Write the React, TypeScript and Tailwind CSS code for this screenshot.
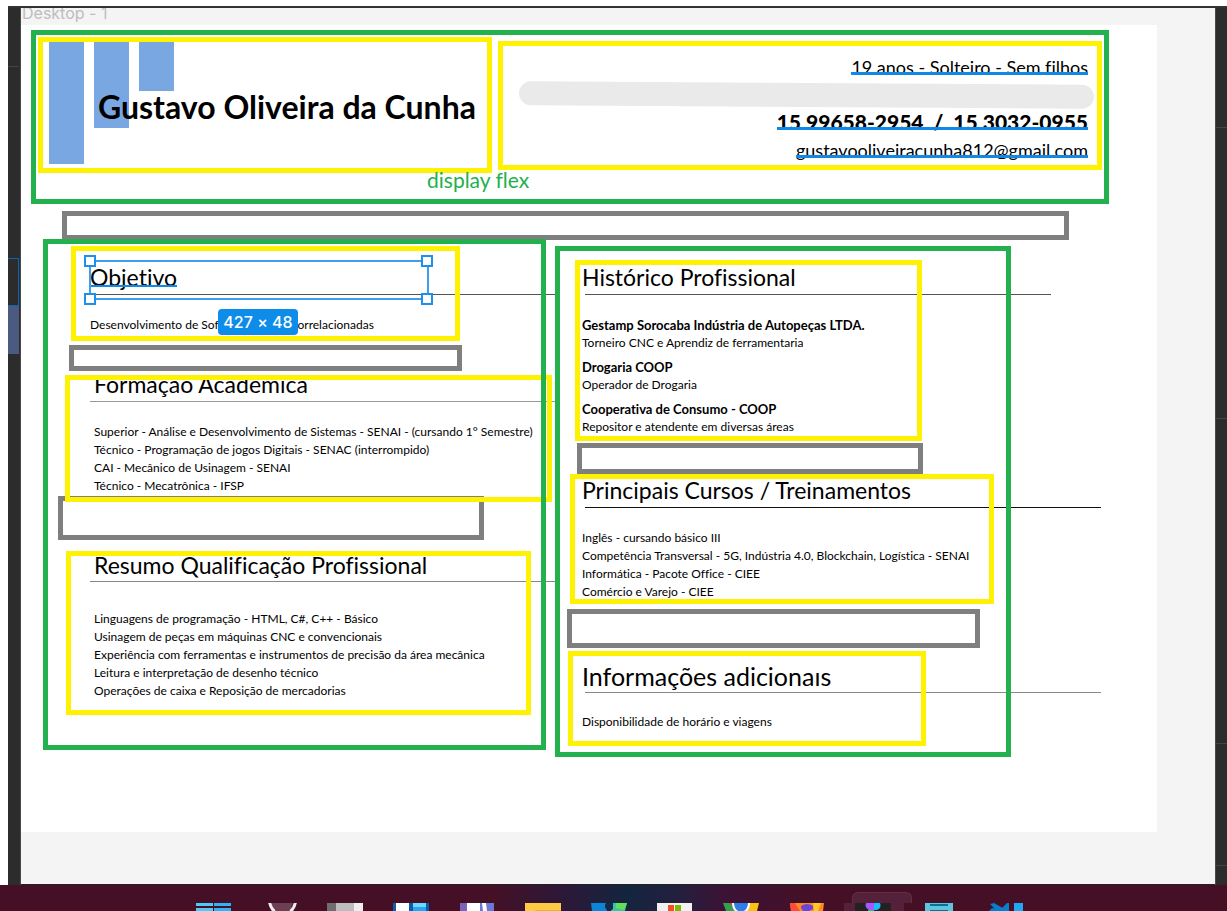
import type { ReactNode } from "react";

const yellowFrame =
  "relative after:absolute after:inset-0 after:border-5 after:border-[#fff200] after:content-[''] after:pointer-events-none";
const greenFrame =
  "relative after:absolute after:inset-0 after:border-5 after:border-[#22b14c] after:content-[''] after:pointer-events-none";

function Spacer({ className }: { className: string }) {
  return <div className={`border-5 border-[#7f7f7f] ${className}`} />;
}

function Section({
  title,
  box,
  inset,
  rule,
  children,
  headingClass = "text-[23px]",
}: {
  title: ReactNode;
  box: string;
  inset: string;
  rule: string;
  children: ReactNode;
  headingClass?: string;
}) {
  return (
    <section className={`${yellowFrame} ${box}`}>
      <h2 className={`relative leading-7 whitespace-nowrap ${inset} ${headingClass}`}>{title}</h2>
      <div className={`h-px ${rule}`} />
      <div className={`text-xs leading-[18px] whitespace-nowrap ${inset}`}>{children}</div>
    </section>
  );
}

function Lines({ items, className = "mt-[21px]" }: { items: string[]; className?: string }) {
  return (
    <ul className={className}>
      {items.map((item) => (
        <li key={item} className="leading-[18px]">
          {item}
        </li>
      ))}
    </ul>
  );
}

function ContactLine({ children, className = "" }: { children: ReactNode; className?: string }) {
  return (
    <p
      className={`relative whitespace-pre leading-7 after:absolute after:inset-x-0 after:bottom-[6px] after:h-[3px] after:bg-[#1088e8] after:content-[''] ${className}`}
    >
      {children}
    </p>
  );
}

const handle = "absolute size-3 border-2 border-[#1e90ea] bg-white";

function Selection() {
  return (
    <div className="pointer-events-none absolute -left-px -top-[3px] h-10 w-[340px] border-2 border-[#3f9fee]">
      <span className={`${handle} -left-[7px] -top-[7px]`} />
      <span className={`${handle} -right-[6px] -top-[7px]`} />
      <span className={`${handle} -bottom-[7px] -left-[7px]`} />
      <span className={`${handle} -bottom-[7px] -right-[6px]`} />
      <span className="absolute left-[127px] top-[47px] flex h-[26px] w-20 items-center justify-center rounded bg-[#0d8ce9] font-[Inter,sans-serif] text-base font-medium text-white">
        427 × 48
      </span>
    </div>
  );
}

const jobs = [
  ["Gestamp Sorocaba Indústria de Autopeças LTDA.", "Torneiro CNC e Aprendiz de ferramentaria"],
  ["Drogaria COOP", "Operador de Drogaria"],
  ["Cooperativa de Consumo - COOP", "Repositor e atendente em diversas áreas"],
];

const taskIcons: { name: string; art: ReactNode }[] = [
  {
    name: "start",
    art: (
      <>
        <path fill="#4fc9f8" d="M1 0h17v3H1zM1 5h17v3H1z" />
        <path fill="#2fb2f6" d="M19 0h17v3H19zM19 5h17v3H19z" />
      </>
    ),
  },
  {
    name: "search",
    art: (
      <>
        <path fill="#6d3f52" d="M8 0h24l-3 8H11z" />
        <path fill="none" stroke="#eee" strokeWidth="3" d="M8.500-1q1 6 5 9.500M34.500-1q-1 6-5 9.500" />
      </>
    ),
  },
  {
    name: "tasks",
    art: (
      <>
        <path fill="#6e6e6e" d="M0 0h9v8H0z" />
        <path fill="#bdbdbd" d="M9 0h18v8H9z" />
        <path fill="#eee" d="M27 0h9v8h-9z" />
      </>
    ),
  },
  {
    name: "widgets",
    art: (
      <>
        <path fill="#0b5cad" d="M0 0h36v8H0z" />
        <path fill="#fff" d="M3 0h13v8H3z" />
        <path fill="#22a7f8" d="M20 0h13v8H20z" />
        <path fill="#6fd8fc" d="M20 0h13v4H20z" />
      </>
    ),
  },
  {
    name: "chat",
    art: (
      <>
        <path fill="#7b63b8" d="M1 0h17v8H1z" />
        <path fill="#6a78d6" d="M18 0h17v8H18z" />
        <path fill="#fff" d="M8 0h13v8H8zM23 0h4l1 8h-4z" />
      </>
    ),
  },
  {
    name: "files",
    art: (
      <>
        <path fill="#ffcb45" d="M0 0h36v8H0z" />
        <path fill="#eeb22c" d="M10 7h26v1H10z" />
      </>
    ),
  },
  {
    name: "edge",
    art: (
      <>
        <path fill="#0b85d8" d="M0 0h16v8H1z" />
        <path fill="#36c5a8" d="M20 0h16l-2 8H20z" />
        <path fill="#66df58" d="M25 0h11l-3 7-8-2z" />
        <path fill="#13294a" d="M15 0h7v6l-3 2h-2q-5-4-2-8z" />
      </>
    ),
  },
  {
    name: "store",
    art: (
      <>
        <path fill="#f1f1f1" d="M0 0h35v8H0z" />
        <path fill="#f25022" d="M11 2h6v6h-6z" />
        <path fill="#7fba00" d="M18 2h6v6h-6z" />
      </>
    ),
  },
  {
    name: "chrome",
    art: (
      <>
        <path fill="#2fa24c" d="M0 0h12v8H3z" />
        <path fill="#e33b2e" d="M6 0h6l-2 4z" />
        <path fill="#fbc116" d="M25 0h11l-2 8H23z" />
        <path fill="#fff" d="M9 0h18q0 5-3 8H12Q9 5 9 0z" />
        <path fill="#2f7de9" d="M11 0h14q0 5-4 8h-6q-4-3-4-8z" />
      </>
    ),
  },
  {
    name: "firefox",
    art: (
      <>
        <path fill="#ff8a1f" d="M1 0h34l-1 8H2z" />
        <path fill="#ff4b3c" d="M1 0h5l5 8H2z" />
        <path fill="#ffc928" d="M24 0h8l-3 8h-4z" />
        <path fill="#6b45d6" d="M12 3q6-4 12 0v3l-4 2h-6l-2-3z" />
      </>
    ),
  },
  {
    name: "figma",
    art: (
      <>
        <path fill="#222" d="M0 0h36v8H0z" />
        <path fill="#a259ff" d="M11 0h8v7h-5q-5-3-3-7z" />
        <path fill="#1abcfe" d="M19 0h6q2 5-3 7h-3z" />
        <path fill="#0acf83" d="M13 7h6v1h-6z" />
      </>
    ),
  },
  {
    name: "notepad",
    art: (
      <>
        <path fill="#5cc6e0" d="M4 0h28v8H4z" />
        <path fill="#0c6f98" d="M9 1h18v2H9zM9 7h18v1H9z" />
      </>
    ),
  },
  {
    name: "code",
    art: (
      <>
        <path fill="#087ccd" d="m3 1 4-1 14 8H10zM15 5l5-5h2v8H2l3-3 5 1z" />
        <path fill="#22a7f2" d="M27 0h9v8h-9z" />
      </>
    ),
  },
];

export default function App() {
  return (
    <div className="flex min-h-screen flex-col overflow-hidden bg-white pt-[6px] font-[Lato,sans-serif] text-black [font-variant-ligatures:none]">
      <div className="ml-2 flex flex-1 flex-col border-t-2 border-[#333]">
        <div className="flex flex-1">
          <aside className="w-[13px] shrink-0 border-r border-[#4a4a4a] bg-[#2c2c2c] pr-px">
            <div className="mt-[58px] h-px bg-[#444]" />
            <div className="mt-[191px] h-12 border border-l-0 border-[#0b65b8]" />
            <div className="h-12 bg-[#4a5a80]" />
          </aside>

          <main className="flex-1 overflow-hidden border-b border-[#222] bg-[#f4f4f4] pb-[51px]">
            <p className="-mt-[6px] ml-px h-[23px] font-[Inter,sans-serif] text-base leading-[22px] text-[#bdbdbd]">
              Desktop - 1
            </p>

            <article className="mr-[58px] bg-white pb-[75px] pt-[5px]">
              <header className={`${greenFrame} ml-[10px] mr-12 flex h-[174px] gap-[6px] px-[7px] pt-[7px]`}>
                <div className={`${yellowFrame} flex h-[136px] w-[454px] items-center`}>
                  <div className="absolute left-[11px] top-1 flex items-start gap-[10px]">
                    <span className="h-[123px] w-[35px] bg-[#78a7e1]" />
                    <span className="h-[87px] w-[35px] bg-[#78a7e1]" />
                    <span className="h-[50px] w-[35px] bg-[#78a7e1]" />
                  </div>
                  <h1 className="relative ml-[60px] whitespace-nowrap pt-1 text-[32px] font-bold leading-10">
                    Gustavo Oliveira da Cunha
                  </h1>
                </div>
                <address
                  className={`${yellowFrame} mt-1 flex h-[129px] flex-1 flex-col items-end pr-[14px] pt-3 text-lg not-italic`}
                >
                  <ContactLine>19 anos - Solteiro - Sem filhos</ContactLine>
                  <div className="-mr-[6px] mt-[2px] h-6 w-[575px] rotate-[0.35deg] rounded-full bg-[#eaeaea]" />
                  <ContactLine className="mt-px text-[21px] font-black">{"15 99658-2954  /  15 3032-0955"}</ContactLine>
                  <ContactLine>
                    <a href="mailto:gustavooliveiracunha812@gmail.com">gustavooliveiracunha812@gmail.com</a>
                  </ContactLine>
                </address>
                <p className="absolute left-[396px] top-[138px] text-[21px] leading-6 text-[#22b14c]">display flex</p>
              </header>

              <Spacer className="ml-[41px] mr-[88px] mt-[7px] h-[29px]" />

              <div className="-mt-px ml-[22px] flex items-start gap-[9px]">
                <div className={`${greenFrame} w-[503px] shrink-0 pb-[35px] pt-[7px] after:z-20`}>
                  <Section
                    title={
                      <>
                        <span className="relative after:absolute after:inset-x-0 after:bottom-1 after:h-[2px] after:bg-[#1088e8]">
                          Objetivo
                        </span>
                        <Selection />
                      </>
                    }
                    box="z-10 ml-7 w-[389px] pb-[7px] pt-[17px]"
                    inset="ml-[19px]"
                    rule="mt-[3px] ml-[19px] w-[465px] bg-[#555]"
                  >
                    <Lines items={["Desenvolvimento de Software e áreas correlacionadas"]} />
                  </Section>
                  <Spacer className="ml-[26px] mt-1 h-[26px] w-[393px]" />
                  <Section
                    title="Formação Acadêmica"
                    box="z-10 ml-[22px] mt-1 w-[487px] pb-[7px] flow-root"
                    inset="ml-[29px]"
                    rule="mt-[3px] ml-[25px] w-[465px] bg-[#999]"
                    headingClass="text-[23px] -mt-[5px]"
                  >
                    <Lines
                      items={[
                        "Superior - Análise e Desenvolvimento de Sistemas - SENAI - (cursando 1° Semestre)",
                        "Técnico - Programação de jogos Digitais - SENAC (interrompido)",
                        "CAI - Mecânico de Usinagem - SENAI",
                        "Técnico - Mecatrônica - IFSP",
                      ]}
                    />
                  </Section>
                  <Spacer className="-mt-[6px] ml-[15px] h-11 w-[426px]" />
                  <Section
                    title="Resumo Qualificação Profissional"
                    box="ml-[23px] mt-[11px] w-[465px] pb-[15px]"
                    inset="ml-7"
                    rule="mt-[2px] ml-6 w-[465px] bg-[#888]"
                  >
                    <Lines
                      className="mt-7"
                      items={[
                        "Linguagens de programação - HTML, C#, C++ - Básico",
                        "Usinagem de peças em máquinas CNC e convencionais",
                        "Experiência com ferramentas e instrumentos de precisão da área mecânica",
                        "Leitura e interpretação de desenho técnico",
                        "Operações de caixa e Reposição de mercadorias",
                      ]}
                    />
                  </Section>
                </div>

                <div className={`${greenFrame} mt-[7px] w-[456px] shrink-0 pb-[11px] pt-[14px] after:z-20`}>
                  <Section
                    title="Histórico Profissional"
                    box="ml-5 w-[347px] pb-[5px] pt-[3px]"
                    inset="ml-[7px]"
                    rule="mt-[3px] ml-[10px] w-[466px] bg-[#555]"
                  >
                    <dl className="mt-[21px] flex flex-col gap-[6px]">
                      {jobs.map(([company, role]) => (
                        <div key={company}>
                          <dt className="text-[13px] font-bold leading-[18px]">{company}</dt>
                          <dd>{role}</dd>
                        </div>
                      ))}
                    </dl>
                  </Section>
                  <Spacer className="ml-[22px] mt-[2px] h-[31px] w-[346px]" />
                  <Section
                    title="Principais Cursos / Treinamentos"
                    box="ml-[15px] w-[424px] pb-[3px] pt-[2px]"
                    inset="ml-3"
                    rule="mt-[3px] ml-[15px] w-[516px] bg-[#111]"
                  >
                    <Lines
                      items={[
                        "Inglês - cursando básico III",
                        "Competência Transversal - 5G, Indústria 4.0, Blockchain, Logística - SENAI",
                        "Informática - Pacote Office - CIEE",
                        "Comércio e Varejo - CIEE",
                      ]}
                    />
                  </Section>
                  <Spacer className="ml-3 mt-[5px] h-[39px] w-[413px]" />
                  <Section
                    title={
                      <span className="relative after:absolute after:-right-1 after:top-0 after:h-[11px] after:w-6 after:bg-white">
                        Informações adicionais
                      </span>
                    }
                    box="ml-[13px] mt-[3px] w-[358px] pb-[15px] pt-[11px]"
                    inset="ml-[14px]"
                    rule="mt-[2px] ml-[17px] w-[516px] bg-[#888]"
                    headingClass="text-[25px]"
                  >
                    <Lines className="mt-5" items={["Disponibilidade de horário e viagens"]} />
                  </Section>
                </div>
              </div>
            </article>
          </main>

          <aside className="w-3 shrink-0 border-l border-[#4a4a4a] bg-[#2c2c2c]">
            <div className="mt-[119px] h-px bg-[#444]" />
            <div className="mt-[290px] h-px bg-[#444]" />
            <div className="mt-[324px] h-px bg-[#444]" />
            <div className="mt-[121px] h-px bg-[#444]" />
          </aside>
        </div>
      </div>

      <footer className="flex h-[26px] items-end bg-[linear-gradient(90deg,#451026_0%,#451026_40%,#2c1838_46%,#14253e_51%,#22203f_55%,#3c1236_59%,#451026_66%,#451026_100%)] pl-[180px]">
        {taskIcons.map(({ name, art }) => (
          <div key={name} className="relative flex w-[66px] shrink-0 items-end justify-center">
            {name === "figma" && (
              <>
                <span className="absolute bottom-2 left-3 h-[11px] w-[60px] rounded-t-md border-x border-t border-[#633043] bg-[#54203a]" />
                <span className="absolute bottom-0 left-1 h-2 w-[60px] bg-[#54203a]" />
              </>
            )}
            <svg aria-hidden="true" className="relative h-2 w-9" viewBox="0 0 36 8">
              {art}
            </svg>
          </div>
        ))}
      </footer>
    </div>
  );
}
